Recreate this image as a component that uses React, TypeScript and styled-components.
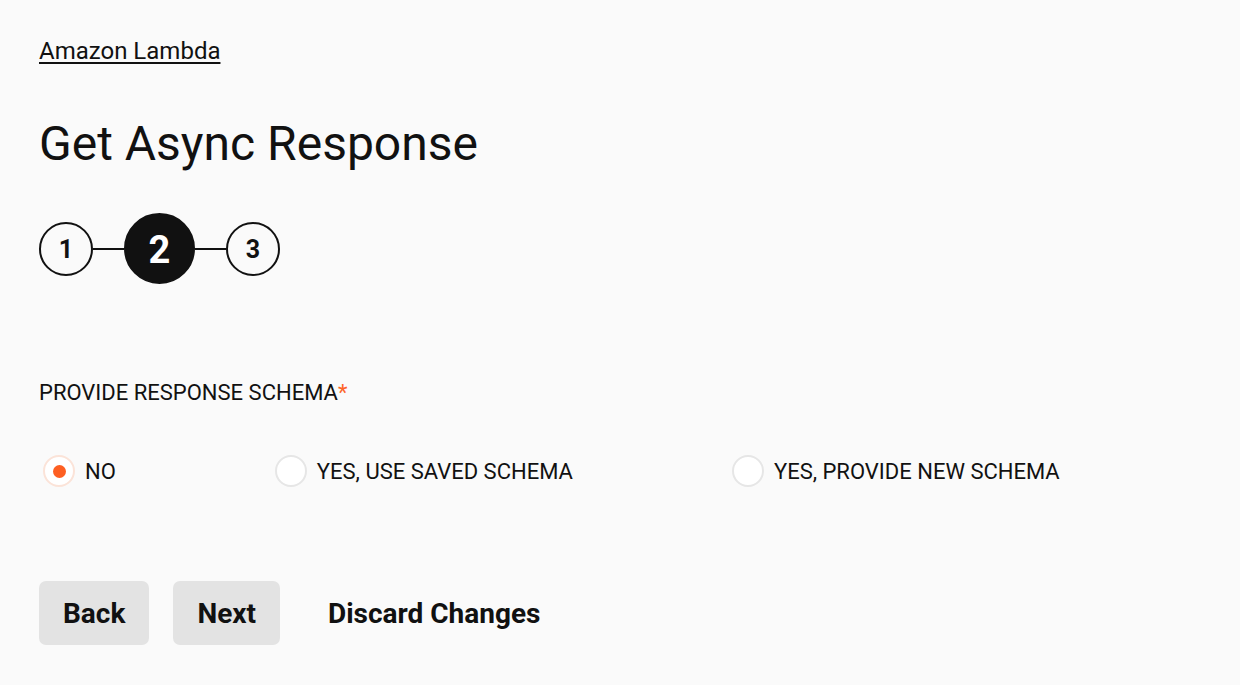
import React, { useState } from "react";
import styled, { createGlobalStyle } from "styled-components";

const Global = createGlobalStyle`
  html, body { margin: 0; padding: 0; background: #fafafa; }
  body { font-family: Roboto, "Noto Sans", Arial, sans-serif; color: #111; }
`;

const Page = styled.div`
  padding: 35px 39px 0;
  display: flex;
  flex-direction: column;
  align-items: flex-start;
`;

const Crumb = styled.a`
  font-size: 24px;
  line-height: 32px;
  color: #111;
  text-decoration: underline;
  text-underline-offset: 3px;
  text-decoration-thickness: 2px;
  cursor: pointer;
`;

const Title = styled.h1`
  margin: 49px 0 0;
  font-size: 48px;
  font-weight: 400;
  line-height: 56px;
`;

const Stepper = styled.div`
  display: flex;
  align-items: center;
  margin-top: 41px;
`;

const Step = styled.div<{ $active?: boolean }>`
  box-sizing: border-box;
  width: ${(p) => (p.$active ? 71 : 54)}px;
  height: ${(p) => (p.$active ? 71 : 54)}px;
  border-radius: 50%;
  border: 2px solid #111;
  background: ${(p) => (p.$active ? "#111" : "transparent")};
  color: ${(p) => (p.$active ? "#fff" : "#111")};
  font-size: ${(p) => (p.$active ? 38 : 25)}px;
  font-weight: 700;
  display: flex;
  align-items: center;
  justify-content: center;
  padding-top: ${(p) => (p.$active ? 3 : 1)}px;
`;

const Connector = styled.div`
  width: 31px;
  height: 2px;
  background: #111;
`;

const FieldLabel = styled.div`
  margin-top: 96px;
  font-size: 22px;
  line-height: 26px;
  text-transform: uppercase;
`;

const Required = styled.span`
  color: #fd6428;
`;

const RadioGroup = styled.div`
  display: flex;
  align-items: center;
  gap: 155px;
  margin-top: 49px;
`;

const Option = styled.label`
  display: flex;
  align-items: center;
  gap: 10px;
  font-size: 22px;
  cursor: pointer;
`;

const RadioCircle = styled.span<{ $checked?: boolean }>`
  box-sizing: border-box;
  width: 32px;
  height: 32px;
  margin-left: 4px;
  border-radius: 50%;
  background: #fff;
  border: 2px solid ${(p) => (p.$checked ? "#fbe3d8" : "#e6e6e6")};
  display: flex;
  align-items: center;
  justify-content: center;
  &::after {
    content: "";
    width: 13px;
    height: 13px;
    border-radius: 50%;
    background: ${(p) => (p.$checked ? "#fd5f22" : "transparent")};
  }
`;

const Actions = styled.div`
  display: flex;
  align-items: center;
  gap: 24px;
  margin-top: 94px;
`;

const Button = styled.button<{ $plain?: boolean }>`
  height: 64px;
  padding: 0 24px;
  border: none;
  border-radius: 7px;
  background: ${(p) => (p.$plain ? "transparent" : "#e3e3e3")};
  font-family: Roboto, Arial, sans-serif;
  font-size: 28px;
  font-weight: 700;
  color: #111;
  cursor: pointer;
`;

const options = ["NO", "YES, USE SAVED SCHEMA", "YES, PROVIDE NEW SCHEMA"];

export default function App() {
  const [sel, setSel] = useState(0);
  return (
    <>
      <Global />
      <Page>
        <Crumb>Amazon Lambda</Crumb>
        <Title>Get Async Response</Title>
        <Stepper>
          <Step>1</Step>
          <Connector />
          <Step $active>2</Step>
          <Connector />
          <Step>3</Step>
        </Stepper>
        <FieldLabel>
          Provide Response Schema<Required>*</Required>
        </FieldLabel>
        <RadioGroup>
          {options.map((o, i) => (
            <Option key={o} onClick={() => setSel(i)}>
              <RadioCircle $checked={sel === i} />
              {o}
            </Option>
          ))}
        </RadioGroup>
        <Actions>
          <Button>Back</Button>
          <Button>Next</Button>
          <Button $plain>Discard Changes</Button>
        </Actions>
      </Page>
    </>
  );
}
